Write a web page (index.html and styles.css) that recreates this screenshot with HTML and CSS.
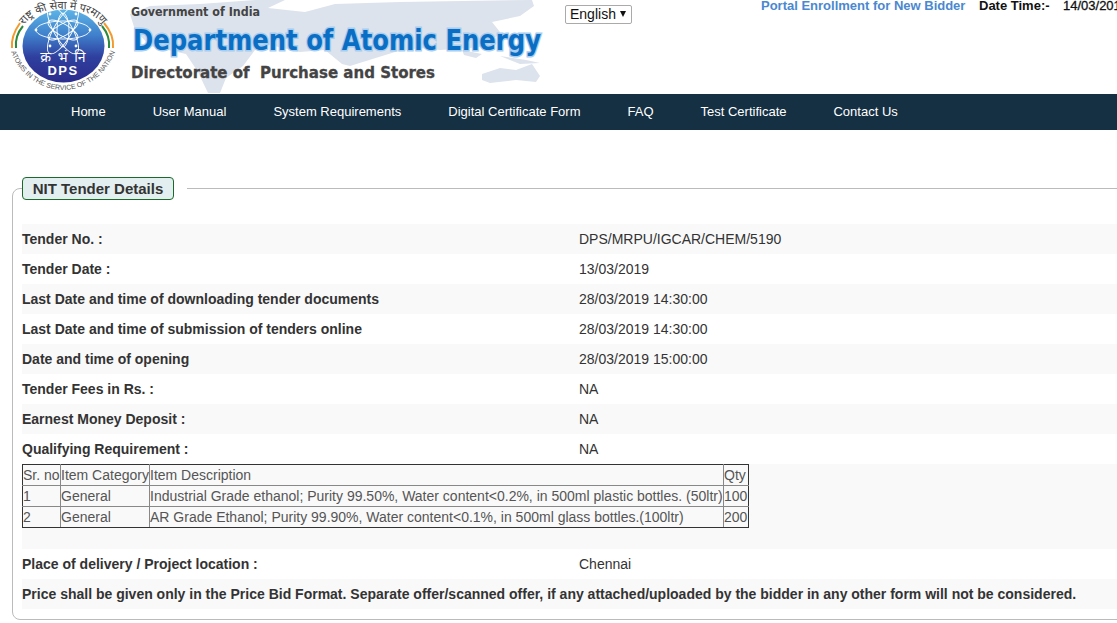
FILE: index.html
```html
<!DOCTYPE html>
<html lang="en">
<head>
<meta charset="utf-8">
<title>NIT Tender Details</title>
<link rel="stylesheet" href="styles.css">
</head>
<body>
<header class="top">
  <svg class="banner" width="565" height="94" viewBox="0 0 565 94">
    <defs>
      <linearGradient id="disc" x1="0" y1="0" x2="0" y2="1">
        <stop offset="0" stop-color="#5db4e6"/>
        <stop offset="0.35" stop-color="#3f80cc"/>
        <stop offset="0.65" stop-color="#2f3f9e"/>
        <stop offset="1" stop-color="#2c2c8c"/>
      </linearGradient>
      <path id="arcTop" d="M19 35 C26 14 46 9 63 9 C82 9 100 14 107 35"/>
      <path id="arcBottom" d="M11 52 C20 76 42 90 63 90 C84 90 106 76 115 52"/>
    </defs>
    <g class="map">
      <path d="M130 14 L150 6 L200 4 L255 0 L285 0 L268 8 L305 12 L335 4 L400 2 L532 0 L534 6 L520 16 L492 22 L500 32 L488 46 L470 48 L440 50 L420 48 L395 52 L350 66 L342 64 L325 50 L300 52 L270 45 L255 50 L243 66 L226 78 L220 93 L208 93 L198 72 L186 54 L150 46 L135 30 Z"/>
      <path d="M462 50 L482 54 L476 58 L464 55 Z"/>
      <path d="M500 56 L526 60 L540 63 L520 64 Z"/>
      <path d="M482 74 L500 68 L516 70 L532 64 L540 76 L536 82 L516 80 L490 83 L482 80 Z"/>
    </g>
    <g class="atom-logo">
      <ellipse cx="63.5" cy="46" rx="41" ry="36.5" fill="url(#disc)"/>
      <g class="atom-lines">
        <ellipse cx="63" cy="30" rx="27" ry="9"/>
        <ellipse cx="63" cy="30" rx="27" ry="9" transform="rotate(60 63 30)"/>
        <ellipse cx="63" cy="30" rx="27" ry="9" transform="rotate(120 63 30)"/>
        <ellipse cx="63" cy="30" rx="17" ry="6" transform="rotate(30 63 30)"/>
        <ellipse cx="63" cy="30" rx="17" ry="6" transform="rotate(90 63 30)"/>
        <ellipse cx="63" cy="30" rx="17" ry="6" transform="rotate(150 63 30)"/>
      </g>
      <g class="atom-dots">
        <circle cx="36" cy="30" r="1.4"/>
        <circle cx="90" cy="30" r="1.4"/>
        <circle cx="50" cy="14" r="1.4"/>
        <circle cx="76" cy="14" r="1.4"/>
        <circle cx="50" cy="46" r="1.4"/>
        <circle cx="76" cy="46" r="1.4"/>
      </g>
      <path class="arc-saffron" d="M12 48 C11 38 15 30 20 23"/>
      <path class="arc-green" d="M16 48 C15 39 18 32 23 26"/>
      <path class="arc-saffron" d="M113 48 C114 38 110 30 104 23"/>
      <path class="arc-green" d="M109 48 C110 39 107 32 102 26"/>
      <text class="logo-hindi" x="63" y="62" text-anchor="middle">क्र भं नि</text>
      <text class="logo-dps" x="63" y="75" text-anchor="middle">DPS</text>
      <text class="logo-arc-top"><textPath href="#arcTop" startOffset="50%" text-anchor="middle">राष्ट्र की सेवा में परमाणु</textPath></text>
      <text class="logo-arc-bottom"><textPath href="#arcBottom" startOffset="50%" text-anchor="middle">ATOMS IN THE SERVICE OF THE NATION</textPath></text>
    </g>
    <text class="b-gov" x="131" y="16" textLength="129" lengthAdjust="spacingAndGlyphs">Government of India</text>
    <text class="b-dept" x="133" y="50" textLength="408" lengthAdjust="spacingAndGlyphs">Department of Atomic Energy</text>
    <text class="b-dir" x="131" y="78" textLength="304" lengthAdjust="spacingAndGlyphs">Directorate of  Purchase and Stores</text>
  </svg>
  <div class="lang"><span>English</span><span class="lang-arrow"></span></div>
  <div class="top-right">
    <a class="enroll" href="#">Portal Enrollment for New Bidder</a>
    <span class="dt-label">Date Time:-</span>
    <span class="dt-value">14/03/2019</span>
  </div>
</header>
<nav class="menu">
  <a href="#">Home</a>
  <a href="#">User Manual</a>
  <a href="#">System Requirements</a>
  <a href="#">Digital Certificate Form</a>
  <a href="#">FAQ</a>
  <a href="#">Test Certificate</a>
  <a href="#">Contact Us</a>
</nav>
<main class="content">
  <fieldset class="panel">
    <legend class="panel-legend"><span class="panel-title">NIT Tender Details</span></legend>
    <div class="row shade"><div class="label">Tender No. :</div><div class="value">DPS/MRPU/IGCAR/CHEM/5190</div></div>
    <div class="row"><div class="label">Tender Date :</div><div class="value">13/03/2019</div></div>
    <div class="row shade"><div class="label">Last Date and time of downloading tender documents</div><div class="value">28/03/2019 14:30:00</div></div>
    <div class="row"><div class="label">Last Date and time of submission of tenders online</div><div class="value">28/03/2019 14:30:00</div></div>
    <div class="row shade"><div class="label">Date and time of opening</div><div class="value">28/03/2019 15:00:00</div></div>
    <div class="row"><div class="label">Tender Fees in Rs. :</div><div class="value">NA</div></div>
    <div class="row shade"><div class="label">Earnest Money Deposit :</div><div class="value">NA</div></div>
    <div class="row"><div class="label">Qualifying Requirement :</div><div class="value">NA</div></div>
    <div class="table-row shade">
      <table class="items">
        <colgroup><col class="c1"><col class="c2"><col class="c3"><col class="c4"></colgroup>
        <tr><td>Sr. no</td><td>Item Category</td><td>Item Description</td><td>Qty</td></tr>
        <tr><td>1</td><td>General</td><td>Industrial Grade ethanol; Purity 99.50%, Water content&lt;0.2%, in 500ml plastic bottles. (50ltr)</td><td>100</td></tr>
        <tr><td>2</td><td>General</td><td>AR Grade Ethanol; Purity 99.90%, Water content&lt;0.1%, in 500ml glass bottles.(100ltr)</td><td>200</td></tr>
      </table>
    </div>
    <div class="row"><div class="label">Place of delivery / Project location :</div><div class="value">Chennai</div></div>
    <div class="row shade"><div class="label wide">Price shall be given only in the Price Bid Format. Separate offer/scanned offer, if any attached/uploaded by the bidder in any other form will not be considered.</div></div>
  </fieldset>
</main>
</body>
</html>
```
FILE: styles.css
```css
html, body { margin: 0; padding: 0; height: 623px; overflow: hidden; background: #fff; }
body { font-family: "Liberation Sans", Arial, sans-serif; font-size: 14px; color: #333; }

.top { display: flex; align-items: flex-start; height: 94px; white-space: nowrap; width: 1300px; }
.banner { display: block; flex: none; }
.map path { fill: #dde3ec; }
.atom-lines ellipse { fill: none; stroke: #fff; stroke-width: 0.9; }
.atom-dots circle { fill: #fff; }
.arc-saffron { fill: none; stroke: #f39a2e; stroke-width: 2; }
.arc-green { fill: none; stroke: #2b8a3e; stroke-width: 2; }
.logo-hindi { font-family: "Noto Sans", "DejaVu Sans", sans-serif; font-size: 14px; fill: #fff; word-spacing: 3px; }
.logo-dps { font-family: "Liberation Sans", sans-serif; font-weight: 700; font-size: 13px; fill: #fff; letter-spacing: 1.5px; }
.logo-arc-top { font-family: "Noto Sans", "DejaVu Sans", sans-serif; font-size: 11px; fill: #444; }
.logo-arc-bottom { font-family: "Liberation Sans", sans-serif; font-size: 7px; fill: #555; }
.b-gov { font-family: "DejaVu Sans", sans-serif; font-weight: 700; font-size: 12px; fill: #444; }
.b-dept { font-family: "DejaVu Sans", sans-serif; font-weight: 700; font-size: 29px; fill: #0a6fc4; stroke: #a8cdee; stroke-width: 3px; paint-order: stroke; }
.b-dir { font-family: "DejaVu Sans", sans-serif; font-weight: 700; font-size: 16px; fill: #444; stroke: #444; stroke-width: 0.3px; white-space: pre; }

.lang { flex: none; box-sizing: border-box; width: 67px; height: 19px; margin-top: 5px; border: 1px solid #aaa; border-radius: 2px; padding: 0 0 1px 4px; display: flex; align-items: center; gap: 4px; color: #111; font-size: 14px; background: #fff; }
.lang-arrow { width: 0; height: 0; border-left: 3.5px solid transparent; border-right: 3.5px solid transparent; border-top: 6px solid #111; margin-bottom: 1px; }

.top-right { display: flex; margin-left: 129px; margin-top: -2px; line-height: 15px; font-size: 13px; font-weight: 700; }
.enroll { color: #4a88cf; text-decoration: none; width: 218px; }
.dt-label { color: #111; width: 84px; }
.dt-value { color: #111; font-weight: 400; font-size: 13px; -webkit-text-stroke: 0.3px #111; }

.menu { display: flex; align-items: center; gap: 47px; box-sizing: border-box; height: 36px; padding: 0 0 1px 71px; background: #152f43; }
.menu a { color: #fff; text-decoration: none; font-size: 13px; }

.content { width: 1320px; padding: 47px 0 0 12px; box-sizing: border-box; }
.panel { margin: 0; padding: 0 0 10px 9px; border: 1px solid #bbb; border-radius: 8px; min-width: 0; }
.panel-legend { padding: 0 13px 0 0; margin: 0 0 24px; }
.panel-title { display: block; box-sizing: border-box; width: 152px; height: 23px; line-height: 21px; text-align: center; border: 1px solid #1a6a2a; border-radius: 4px; background: #e2eef0; font-weight: 700; font-size: 15px; color: #333; }

.row { display: flex; align-items: center; height: 30px; }
.shade { background: #f9f9f9; }
.label { width: 557px; font-weight: 700; color: #333; flex: none; }
.label.wide { width: auto; white-space: nowrap; }
.value { color: #333; }

.table-row { height: 85px; }
.items { border-collapse: collapse; table-layout: fixed; width: 726px; background: #f9f9f9; color: #555; }
.items td { border: 1px solid #888; padding: 0; height: 20px; line-height: 20px; white-space: nowrap; overflow: hidden; }
.items tr:first-child td { border-top-color: #333; }
.items tr:last-child td { border-bottom-color: #333; }
.items td:first-child { border-left-color: #333; }
.items td:last-child { border-right-color: #333; }
.c1 { width: 38px; }
.c2 { width: 89px; }
.c3 { width: 574px; }
.c4 { width: 25px; }
```
